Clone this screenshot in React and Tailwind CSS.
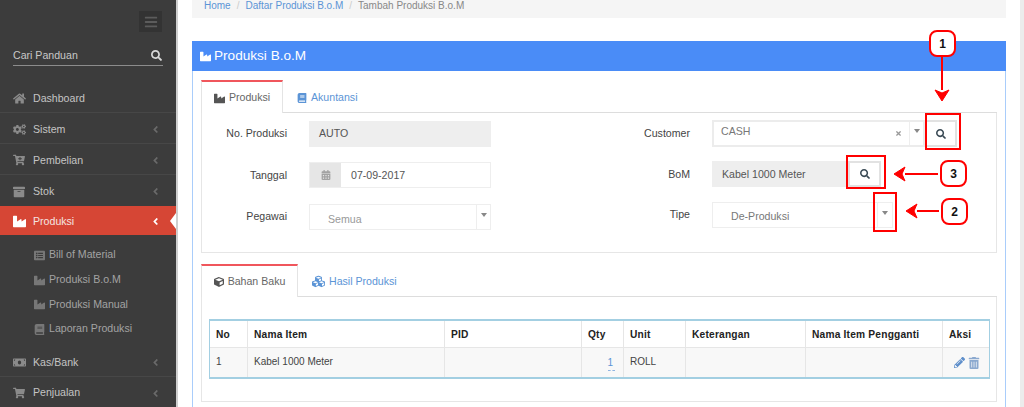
import { FaBars, FaSearch, FaHome, FaCogs, FaCartPlus, FaArchive, FaIndustry, FaAngleLeft, FaBook, FaCalendarAlt, FaCube, FaCubes, FaPencilAlt, FaTrashAlt, FaMoneyBill, FaShoppingCart, FaListAlt, FaTimes } from 'react-icons/fa'

function NavRow({ icon: Icon, label, size = 13, arrow = true, border = true }) {
  return (
    <div className={`h-[30.75px] pt-[3px] flex items-center pl-[13px] pr-[15px] text-[10.6px] text-[#c4c4c4] ${border ? 'border-b border-[#474747]' : ''}`}>
      <span className="w-[20px] flex items-center text-[#8a8a8a]">
        <Icon size={size} />
      </span>
      <span className="flex-1">{label}</span>
      {arrow && <FaAngleLeft size={11} className="text-[#6a6a6a]" />}
    </div>
  )
}

function SubRow({ icon: Icon, label }) {
  return (
    <div className="h-[24.7px] flex items-center pl-[34px] text-[10.6px] text-[#a3a3a3]">
      <span className="w-[15px] text-[#777777]">
        <Icon size={11} />
      </span>
      <span>{label}</span>
    </div>
  )
}

function Sidebar() {
  return (
    <aside className="w-[178px] shrink-0 h-full bg-[#3c3c3c] border-r-2 border-[#cfcfcf] flex flex-col overflow-hidden">
      <div className="flex justify-end pt-[11px] pr-[14px]">
        <div className="w-[23px] h-[21px] bg-[#333333] flex items-center justify-center text-[#5c5c5c]">
          <FaBars size={14} />
        </div>
      </div>
      <div className="mx-[13px] mt-[15px] h-[19px] border-b border-[#8c8c8c] flex items-center justify-between pr-[1px] text-[10.6px] text-[#c8c8c8]">
        <span>Cari Panduan</span>
        <FaSearch size={11} className="text-[#d8d8d8]" />
      </div>
      <div className="mt-[17px]">
        <NavRow icon={FaHome} label="Dashboard" arrow={false} />
        <NavRow icon={FaCogs} label="Sistem" />
        <NavRow icon={FaCartPlus} label="Pembelian" size={12} />
        <NavRow icon={FaArchive} label="Stok" size={12} border={false} />
      </div>
      <div className="relative h-[30px] pt-[3px] bg-[#d64635] flex items-center pl-[13px] pr-[15px] text-[10.6px] text-[#f4e4e1]">
        <span className="w-[20px] text-white"><FaIndustry size={13} /></span>
        <span className="flex-1">Produksi</span>
        <FaAngleLeft size={11} className="text-white" />
        <span className="absolute right-0 top-[7px] w-0 h-0 border-y-[8px] border-y-transparent border-r-[6px] border-r-white" />
      </div>
      <div className="pt-[8px] pb-[5px]">
        <SubRow icon={FaListAlt} label="Bill of Material" />
        <SubRow icon={FaIndustry} label="Produksi B.o.M" />
        <SubRow icon={FaIndustry} label="Produksi Manual" />
        <SubRow icon={FaBook} label="Laporan Produksi" />
      </div>
      <NavRow icon={FaMoneyBill} label="Kas/Bank" />
      <NavRow icon={FaShoppingCart} label="Penjualan" size={12} border={false} />
    </aside>
  )
}

function Tabs({ items, width }) {
  const [active, other] = items
  return (
    <div className="flex h-[33px] border-b border-[#dddddd] text-[10.6px]">
      <div className={`${width} h-[33px] pt-[1px] border-t-2 border-t-[#f0565c] border-x border-x-[#e4e4e4] bg-white flex items-center justify-center gap-[4px] text-[#666666]`}>
        {active.icon}
        <span>{active.label}</span>
      </div>
      <div className="flex items-center gap-[4px] px-[14px] pt-[3px] text-[#5b94d6]">
        {other.icon}
        <span>{other.label}</span>
      </div>
    </div>
  )
}

function Row({ label, labelWidth, children }) {
  return (
    <div className="flex items-center h-[27px]">
      <label className={`${labelWidth} text-right text-[10.6px] text-[#444444] mr-[22px] pt-[1px]`}>{label}</label>
      {children}
    </div>
  )
}

function Caret() {
  return <span className="w-0 h-0 border-x-[3px] border-x-transparent border-t-[4px] border-t-[#888888]" />
}

function Form() {
  return (
    <div className="border border-t-0 border-[#e6e6e6] h-[140px] pt-[7px] pl-[5px] flex">
      <div className="w-[383px] shrink-0 flex flex-col gap-[14.5px]">
        <Row label="No. Produksi" labelWidth="w-[80px]">
          <div className="w-[182px] h-[26px] pt-[1px] bg-[#eeeeee] pl-[10px] flex items-center text-[10.6px] text-[#555555]">AUTO</div>
        </Row>
        <Row label="Tanggal" labelWidth="w-[80px]">
          <div className="w-[182px] h-[26px] flex border border-[#eeeeee] text-[10.6px] text-[#555555]">
            <div className="w-[31px] bg-[#e6e6e6] flex items-center justify-center text-[#a2a2a2]"><FaCalendarAlt size={10} /></div>
            <div className="pl-[10px] pt-[1px] flex items-center">07-09-2017</div>
          </div>
        </Row>
        <Row label="Pegawai" labelWidth="w-[80px]">
          <div className="w-[182px] h-[26px] flex border border-[#eeeeee] text-[10.6px] text-[#999999]">
            <div className="flex-1 pl-[18px] pt-[7px]">Semua</div>
            <div className="w-[14px] border-l border-[#eeeeee] flex justify-center pt-[8px]"><Caret /></div>
          </div>
        </Row>
      </div>
      <div className="flex flex-col gap-[13.5px]">
        <Row label="Customer" labelWidth="w-[100px]">
          <div className="flex">
            <div className="w-[213px] h-[27px] flex border-2 border-[#ececec] text-[10.6px] text-[#777777]">
              <div className="flex-1 pl-[7px] pb-[4px] flex items-center">CASH</div>
              <div className="w-[14px] flex items-center text-[#999999]"><FaTimes size={7} /></div>
              <div className="w-[14px] border-l border-[#eeeeee] flex justify-center pt-[7px]"><Caret /></div>
            </div>
            <div className="w-[32px] h-[27px] bg-white border-2 border-[#e2e2e2] flex items-center justify-center text-[#3a4a55]">
              <FaSearch size={10} />
            </div>
          </div>
        </Row>
        <Row label="BoM" labelWidth="w-[100px]">
          <div className="flex">
            <div className="w-[136px] h-[26px] pt-[1px] bg-[#eeeeee] pl-[10px] flex items-center text-[10.6px] text-[#555555]">Kabel 1000 Meter</div>
            <div className="w-[33px] h-[26px] bg-white border-2 border-[#e2e2e2] flex items-center justify-center text-[#3a4a55]">
              <FaSearch size={10} />
            </div>
          </div>
        </Row>
        <Row label="Tipe" labelWidth="w-[100px]">
          <div className="w-[181px] h-[26px] flex border border-[#eeeeee] text-[10.6px] text-[#777777]">
            <div className="flex-1 pl-[18px] pt-[6px]">De-Produksi</div>
            <div className="w-[15px] border-l border-[#eeeeee] flex justify-center pt-[8px]"><Caret /></div>
          </div>
        </Row>
      </div>
    </div>
  )
}

const cols = [
  ['No', 'w-[38px]'],
  ['Nama Item', 'w-[197px]'],
  ['PID', 'w-[137px]'],
  ['Qty', 'w-[42px]'],
  ['Unit', 'w-[62px]'],
  ['Keterangan', 'w-[120px]'],
  ['Nama Item Pengganti', 'w-[137px]'],
  ['Aksi', 'flex-1'],
]

function ItemTable() {
  const cell = 'border-r border-[#e6e6e6] px-[6px] last:border-r-0'
  return (
    <div className="border-t-2 border-b-2 border-x border-[#a3cfe2] text-[10px]">
      <div className="flex h-[26px] items-center text-[10.2px] font-bold text-[#222222] tracking-[0.2px]">
        {cols.map(([name, w]) => (
          <div key={name} className={`${w} ${cell} h-full pt-[1px] flex items-center`}>{name}</div>
        ))}
      </div>
      <div className="flex h-[30px] bg-[#f8f8f8] border-t border-[#e6e6e6] text-[#444444]">
        <div className={`${cols[0][1]} ${cell} pt-[6px]`}>1</div>
        <div className={`${cols[1][1]} ${cell} pt-[6px]`}>Kabel 1000 Meter</div>
        <div className={`${cols[2][1]} ${cell}`} />
        <div className={`${cols[3][1]} ${cell} pt-[9px] text-right text-[#5b94d6] leading-[11px]`}>
          <div className="pr-[4px]">1</div>
          <div className="ml-auto mr-[2px] w-[7px] border-t border-dashed border-[#8fb4e2] mt-[2px]" />
        </div>
        <div className={`${cols[4][1]} ${cell} pt-[6px]`}>ROLL</div>
        <div className={`${cols[5][1]} ${cell}`} />
        <div className={`${cols[6][1]} ${cell}`} />
        <div className="flex-1 flex items-center gap-[3px] pl-[11px] text-[#5f8fcb]">
          <FaPencilAlt size={11} />
          <FaTrashAlt size={12} className="text-[#8ba9cf]" />
        </div>
      </div>
    </div>
  )
}

// red notes drawn over the screenshot
function Note({ children, className }) {
  return (
    <div className={`absolute w-[27px] h-[27px] bg-white border-2 border-[#ff0000] rounded-[8px] flex items-center justify-center text-[12px] font-bold text-[#111111] ${className}`}>
      {children}
    </div>
  )
}

function Annotations() {
  return (
    <>
      <div className="absolute left-[925px] top-[113px] w-[36px] h-[37px] border-[2px] border-[#ff0000]" />
      <div className="absolute left-[846px] top-[155px] w-[40px] h-[34px] border-[2px] border-[#ff0000]" />
      <div className="absolute left-[873px] top-[192px] w-[24px] h-[40px] border-[2px] border-[#ff0000]" />
      <Note className="left-[929px] top-[30px]">1</Note>
      <Note className="left-[940px] top-[160px]">3</Note>
      <Note className="left-[941px] top-[198px]">2</Note>
      <svg className="absolute left-0 top-0" width="1024" height="407" fill="#ff0000" stroke="#ff0000">
        <path d="M942 57V90" strokeWidth="2" />
        <path d="M935 90 L942 101 L949 90 L942 93 Z" />
        <path d="M938 174H905" strokeWidth="2" />
        <path d="M905 167 L894 174 L905 181 L902 174 Z" />
        <path d="M939 211H917" strokeWidth="2" />
        <path d="M917 204 L906 211 L917 218 L914 211 Z" />
      </svg>
    </>
  )
}

export default function App() {
  return (
    <div className="relative w-[1024px] h-[407px] overflow-hidden bg-white flex font-['Liberation_Sans',Arial,sans-serif]">
      <Sidebar />
      <main className="flex-1 min-w-0 pl-[14px] pr-[14px]">
        <div className="h-[18px] bg-[#f5f5f5] pl-[12px] pb-[6px] flex items-center gap-[6px] text-[10px] leading-none">
          <span className="text-[#5b94d6]">Home</span>
          <span className="text-[#cccccc]">/</span>
          <span className="text-[#5b94d6]">Daftar Produksi B.o.M</span>
          <span className="text-[#cccccc]">/</span>
          <span className="text-[#888888]">Tambah Produksi B.o.M</span>
        </div>
        <section className="mt-[23px] border border-[#a9cdfb] h-[400px]">
          <div className="h-[30px] -mx-px -mt-px bg-[#4a8cf7] flex items-center gap-[3px] pl-[8px] text-[13.6px] text-white">
            <FaIndustry size={11} />
            <span>Produksi B.o.M</span>
          </div>
          <div className="px-[8px] pt-[9px]">
            <Tabs
              width="w-[82px]"
              items={[
                { icon: <FaIndustry size={11} className="text-[#555555]" />, label: 'Produksi' },
                { icon: <FaBook size={10} />, label: 'Akuntansi' },
              ]}
            />
            <Form />
            <div className="mt-[11px]">
              <Tabs
                width="w-[97px]"
                items={[
                  { icon: <FaCube size={10} className="text-[#555555]" />, label: 'Bahan Baku' },
                  { icon: <FaCubes size={13} />, label: 'Hasil Produksi' },
                ]}
              />
              <div className="border border-t-0 border-[#e6e6e6] h-[105px] pl-[7px] pr-[6px] pt-[22px]">
                <ItemTable />
              </div>
            </div>
          </div>
        </section>
      </main>
      <div className="w-[4px] bg-[#ececec]" />
      <Annotations />
    </div>
  )
}
